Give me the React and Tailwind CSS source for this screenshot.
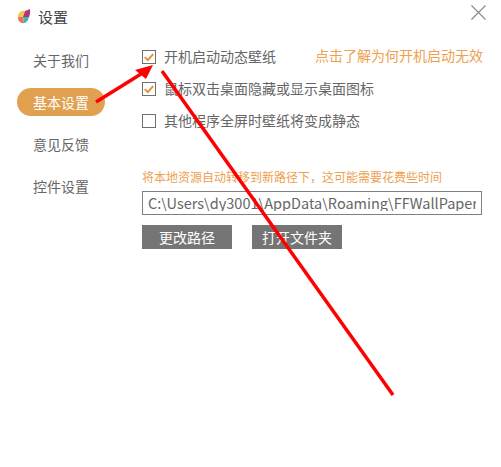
import React from 'react';
import { X } from 'lucide-react';

const font = "font-['Noto_Sans_CJK_SC','Noto_Sans',sans-serif]";

function Check({ checked, label }) {
  return (
    <div className="flex items-center gap-2 h-[32px]">
      <div className="w-[14px] h-[14px] border border-[#707070] flex items-center justify-center">
        {checked && (
          <svg width="10" height="9" viewBox="0 0 10 9" fill="none">
            <path d="M0.8 4.2 L3.8 7.2 L9.2 1.2" stroke="#e08f35" strokeWidth="1.9" />
          </svg>
        )}
      </div>
      <span className="mt-[-2px] text-[14px] text-[#666]">{label}</span>
    </div>
  );
}

export default function App() {
  const nav = ['关于我们', '基本设置', '意见反馈', '控件设置'];
  return (
    <div className={`relative w-[501px] h-[467px] bg-white overflow-hidden ${font}`}>
      <div className="flex items-center h-[36px] pl-[17px]">
        <svg className="mt-[-3px]" width="14" height="16" viewBox="0 0 14 16">
          <path d="M1 6 C2 3 5 1 8 2 L6 8 L1 8 Z" fill="#f2c94c" />
          <path d="M1 8 L6 8 L7 14 C4 15 1 12 1 8 Z" fill="#e8705f" />
          <path d="M6 8 L12 8 C11 12 9 14 7 14 Z" fill="#3fb8a5" />
          <path d="M8 2 L13 0 C13.500 3 13 6 12 8 L6 8 Z" fill="#b5347a" />
        </svg>
        <span className="ml-[7px] mt-[-2px] text-[15px] text-[#444]">设置</span>
        <X className="ml-auto mr-[9px] mt-[-12px] text-[#888]" size={27} strokeWidth={1} />
      </div>

      <div className="flex pl-[17px] pt-[10px]">
        <nav className="w-[88px] flex flex-col gap-[14px]">
          {nav.map((item, i) => (
            <div
              key={item}
              className={`h-[28px] flex items-center justify-center rounded-full text-[14px] ${
                i === 1 ? 'bg-[#e0a050] text-white' : 'text-[#666]'
              }`}
            >
              {item}
            </div>
          ))}
        </nav>

        <div className="ml-[37px] w-[340px] mt-[-5px]">
          <div className="relative">
            <Check checked label="开机启动动态壁纸" />
            <span className="absolute left-[173px] top-[4px] text-[14px] leading-[20px] text-[#ee9f4f] whitespace-nowrap">
              点击了解为何开机启动无效
            </span>
          </div>
          <Check checked label="鼠标双击桌面隐藏或显示桌面图标" />
          <Check label="其他程序全屏时壁纸将变成静态" />

          <p className="mt-[31px] text-[12px] leading-[18px] text-[#ee9f4f] whitespace-nowrap">
            将本地资源自动转移到新路径下，这可能需要花费些时间
          </p>
          <div className="mt-[5px] h-[24px] border border-[#808080] pl-[5px] pr-[5px] pt-[1px]">
            <div className="h-[18px] overflow-hidden text-[14.5px] leading-[20px] text-[#666] whitespace-nowrap">
              C:\Users\dy3001\AppData\Roaming\FFWallPaper
            </div>
          </div>
          <div className="flex gap-[20px] mt-[10px]">
            <button className="w-[90px] h-[24px] bg-[#757575] text-white text-[14px] leading-[24px]">更改路径</button>
            <button className="w-[90px] h-[24px] bg-[#757575] text-white text-[14px] leading-[24px]">打开文件夹</button>
          </div>
        </div>
      </div>

      {/* annotation arrows drawn over the dialog */}
      <svg className="absolute inset-0 pointer-events-none" width="501" height="467">
        <path d="M96 102 L141 74" stroke="#ff0000" strokeWidth="3.5" />
        <path d="M153 65 L135 70 L146 79 Z" fill="#ff0000" />
        <path d="M162 71 L393 395" stroke="#ff0000" strokeWidth="3.5" />
      </svg>
    </div>
  );
}
